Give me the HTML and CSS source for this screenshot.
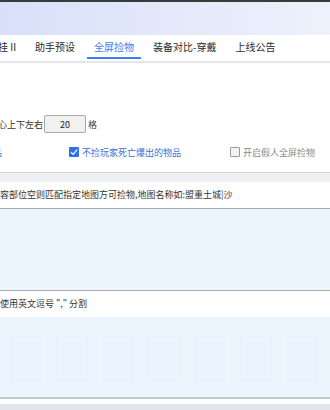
FILE: index.html
```html
<!DOCTYPE html>
<html lang="zh">

<head>
    <meta charset="UTF-8">
    <title>全屏捡物</title>
    <link rel="stylesheet" href="styles.css">
</head>

<body>
    <div class="topLine"></div>
    <div class="banner"></div>

    <!--Tabs-->
    <div class="tabs">
        <div class="tab">挂 II</div>
        <div class="tab">助手预设</div>
        <div class="tab active">全屏捡物</div>
        <div class="tab">装备对比-穿戴</div>
        <div class="tab">上线公告</div>
    </div>

    <!--Settings-->
    <div class="settings">
        <div class="rangeRow">
            <span class="rangeLabel">心上下左右</span>
            <input type="text" class="rangeInput" value="20">
            <span>格</span>
        </div>
        <div class="optionRow">
            <div class="opt optFirst"><span class="blueText">品</span></div>
            <div class="opt optSecond">
                <span class="box checked">
                    <svg width="10" height="10" viewBox="0 0 10 10"><path d="M2 5.2 L4.2 7.4 L8.2 2.6" fill="none" stroke="#fff" stroke-width="1.3"/></svg>
                </span>
                <span class="blueText">不捡玩家死亡爆出的物品</span>
            </div>
            <div class="opt">
                <span class="box"></span>
                <span class="grayText">开启假人全屏捡物</span>
            </div>
        </div>
    </div>

    <!--Lists-->
    <div class="bandGray"></div>
    <div class="hintRow">容部位空则匹配指定地图方可捡物,地图名称如:盟重土城|沙</div>
    <div class="listArea"></div>
    <div class="hintRow">使用英文逗号 "," 分割</div>
    <div class="listArea lower">
        <div class="cells">
            <div class="cell"></div>
            <div class="cell"></div>
            <div class="cell"></div>
            <div class="cell"></div>
            <div class="cell"></div>
            <div class="cell"></div>
            <div class="cell"></div>
        </div>
    </div>
    <div class="footGap"></div>
    <div class="footBar"></div>
</body>

</html>
```

FILE: styles.css
```css
body {
    margin: 0;
    width: 330px;
    height: 410px;
    overflow: hidden;
    font-family: "Noto Sans CJK SC", "Noto Sans", sans-serif;
    font-size: 9px;
    color: #333;
    background-color: #fff;
}

.topLine {
    height: 2px;
    background-color: #3a3a3c;
}

.banner {
    height: 33px;
    background: linear-gradient(90deg, #d9dff9 0%, #e3e9fa 50%, #ecf1fb 100%);
}

/* tabs */

.tabs {
    display: flex;
    gap: 5px;
    margin-left: -9px;
    background-color: #fff;
    border-bottom: 2px solid #e4e5e8;
    box-sizing: border-box;
    height: 28px;
}

.tab {
    height: 24px;
    line-height: 24px;
    padding: 0 7px;
    font-size: 10px;
    color: #2b2b2b;
    box-sizing: border-box;
}

.active {
    color: #3d7cf2;
    border-bottom: 2px solid #3d7cf2;
}

/* settings */

.settings {
    height: 109px;
    padding-top: 52px;
    box-sizing: border-box;
}

.rangeRow {
    display: flex;
    align-items: center;
    height: 18px;
}

.rangeLabel {
    margin-left: -2px;
}

.rangeInput {
    width: 42px;
    height: 18px;
    margin: 0 2px 0 1px;
    padding: 0;
    box-sizing: border-box;
    border: 1px solid #a9a9a9;
    border-radius: 2px;
    background-color: #f1f1f1;
    font-family: inherit;
    font-size: 9px;
    color: #222;
    text-align: center;
}

.optionRow {
    display: flex;
    align-items: center;
    margin-top: 13px;
    height: 12px;
}

.opt {
    display: flex;
    align-items: center;
    gap: 3px;
}

.optFirst {
    margin-left: -7px;
    width: 76px;
}

.optSecond {
    width: 161px;
}

.blueText {
    color: #3b6fd9;
}

.grayText {
    color: #8a8a8a;
}

.box {
    width: 10px;
    height: 10px;
    box-sizing: border-box;
    border: 1px solid #9a9a9a;
    background-color: #f3f3f3;
    border-radius: 1px;
    display: flex;
}

.checked {
    border: none;
    background-color: #2f6ee6;
}

/* lists */

.bandGray {
    height: 9px;
    background-color: #eeeff2;
    border-top: 1px solid #d7d8db;
}

.hintRow {
    height: 26px;
    line-height: 26px;
    white-space: nowrap;
    background-color: #fff;
}

.listArea {
    height: 81px;
    background-color: #ecf4fe;
    border-top: 1px solid #a9abae;
    border-bottom: 1px solid #a9abae;
}

.lower {
    border-top: none;
    border-bottom: 2px solid #c6c8cb;
    padding-top: 19px;
    height: 61px;
}

.cells {
    display: flex;
    gap: 14px;
    height: 45px;
    padding-left: 10px;
}

.cell {
    width: 30px;
    background-color: #ebf3fe;
    border: 1px solid #e9f1fd;
}

.footGap {
    height: 5px;
    background-color: #fff;
}

.footBar {
    height: 10px;
    background-color: #e2e5ec;
}
```
